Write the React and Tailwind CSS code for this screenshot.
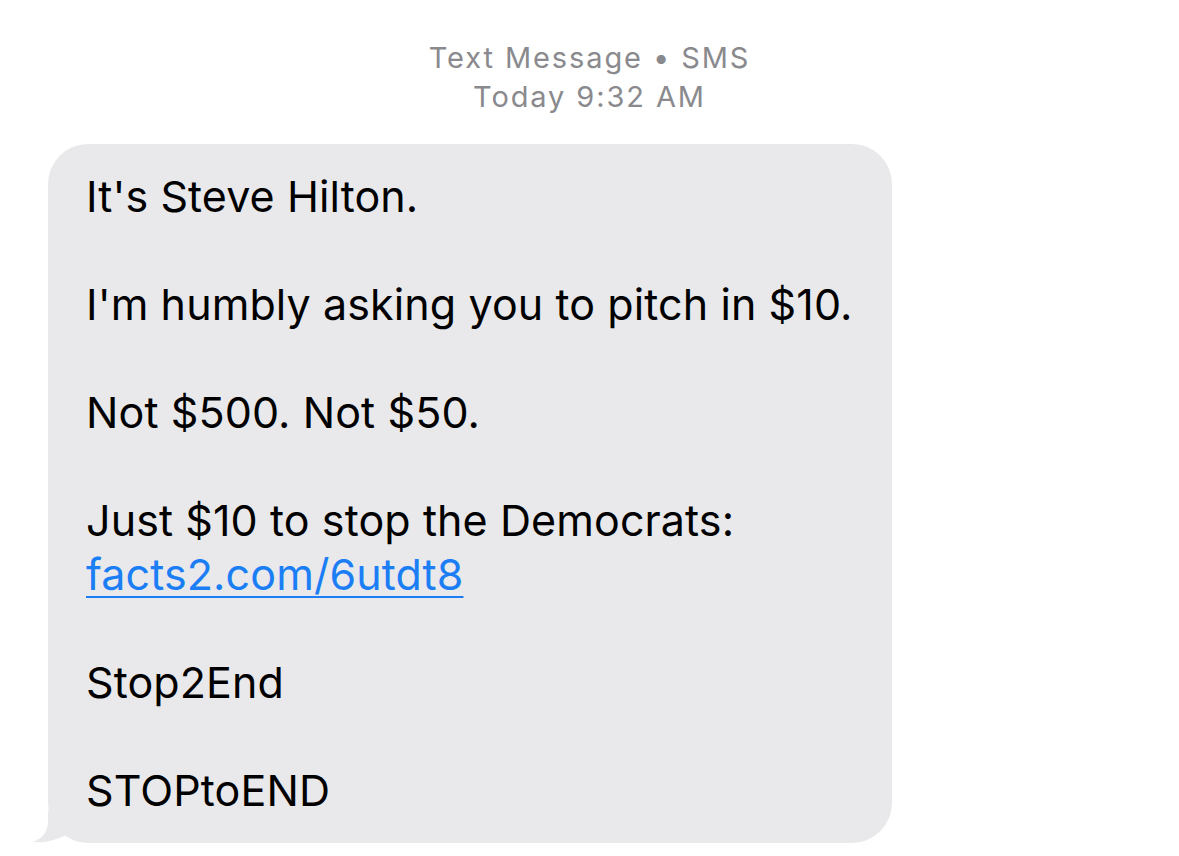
export default function App() {
  const lines = [
    "It's Steve Hilton.",
    '',
    "I'm humbly asking you to pitch in $10.",
    '',
    'Not $500. Not $50.',
    '',
    'Just $10 to stop the Democrats:',
  ];
  const tail = ['', 'Stop2End', '', 'STOPtoEND'];

  return (
    <div className="w-[1179px] h-[856px] bg-white overflow-hidden font-['Inter',sans-serif]">
      {/* Header */}
      <div className="pt-[38px] text-center text-[#8a8a8e] text-[29px] leading-[39px] tracking-[1.9px]">
        <div>Text Message • SMS</div>
        <div>Today 9:32 AM</div>
      </div>

      {/* Bubble */}
      <div className="mt-[28px] ml-[48px] w-[844px] relative">
        <div className="bg-[#e9e9eb] rounded-[40px] pl-[38px] pr-[30px] pt-[25px] pb-[26px] text-black text-[43px] leading-[54px] tracking-[0.1px]">
          {lines.map((l, i) => (
            <div key={i} className="h-[54px]">{l}</div>
          ))}
          <div className="h-[54px]">
            <span className="text-[#1b7ef5] underline decoration-[2px] underline-offset-[6px]">facts2.com/6utdt8</span>
          </div>
          {tail.map((l, i) => (
            <div key={i} className="h-[54px]">{l}</div>
          ))}
        </div>
        {/* tail */}
        <svg className="absolute left-[-16px] bottom-0" width="60" height="32" viewBox="0 0 60 32">
          <path
            d="M16 0 L16 10 C16 21 10 28 0.5 31 C12 32.5 25 29 36 23 Q44 28 60 32 L60 0 Z"
            fill="#e9e9eb"
          />
        </svg>
      </div>
    </div>
  );
}
